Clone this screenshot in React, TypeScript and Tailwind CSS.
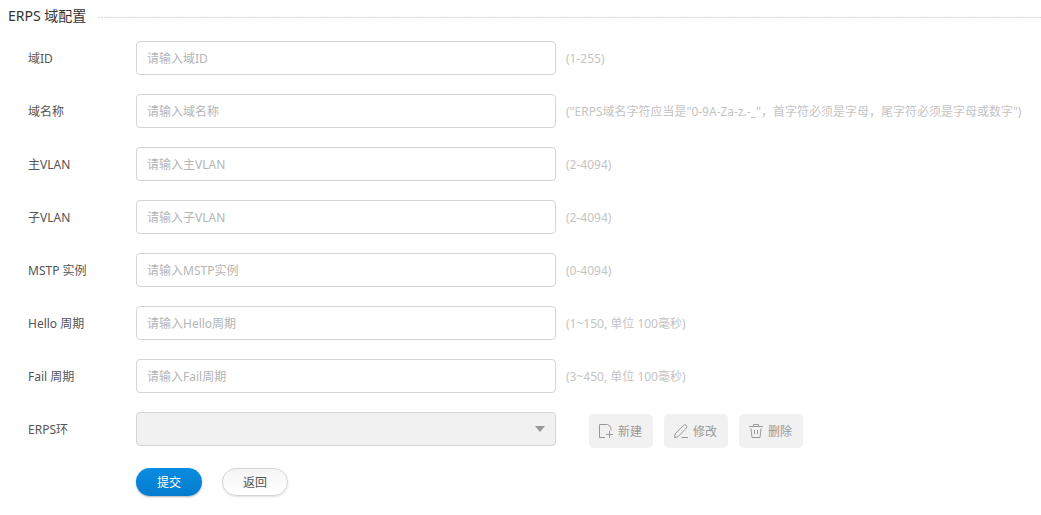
import React from 'react';

interface Field {
  id: string;
  label: string;
  placeholder: string;
  hint: string;
}

const fields: Field[] = [
  { id: 'domain-id', label: '域ID', placeholder: '请输入域ID', hint: '(1-255)' },
  {
    id: 'domain-name',
    label: '域名称',
    placeholder: '请输入域名称',
    hint: '("ERPS域名字符应当是"0-9A-Za-z.-_"，首字符必须是字母，尾字符必须是字母或数字")'
  },
  { id: 'main-vlan', label: '主VLAN', placeholder: '请输入主VLAN', hint: '(2-4094)' },
  { id: 'sub-vlan', label: '子VLAN', placeholder: '请输入子VLAN', hint: '(2-4094)' },
  { id: 'mstp', label: 'MSTP 实例', placeholder: '请输入MSTP实例', hint: '(0-4094)' },
  { id: 'hello', label: 'Hello 周期', placeholder: '请输入Hello周期', hint: '(1~150, 单位 100毫秒)' },
  { id: 'fail', label: 'Fail 周期', placeholder: '请输入Fail周期', hint: '(3~450, 单位 100毫秒)' }
];

const IconSvg: React.FC<{ children: React.ReactNode }> = ({ children }) => (
  <svg width="16" height="16" viewBox="0 0 16 16" fill="none" stroke="currentColor" aria-hidden="true" className="shrink-0">
    {children}
  </svg>
);

const NewIcon = () => (
  <IconSvg>
    <path d="M7 14.500h-5.500v-13h8q2.500 1 3.500 3.500v2.500M11.500 8v7M8 11.500h7" />
  </IconSvg>
);

const EditIcon = () => (
  <IconSvg>
    <path d="M1.500 14.500l.5-3.500 8.500-8.700q1.300-1.200 2.700.1t.2 2.700L5 13.700zM8.500 14.500H15" />
  </IconSvg>
);

const DeleteIcon = () => (
  <IconSvg>
    <path d="M1 3.500h14M5.500 3.500v-2h5v2M3 5.500l1 9h8l1-9M6.500 7v4M9.500 7v4" />
  </IconSvg>
);

const actions = [
  { label: '新建', icon: <NewIcon /> },
  { label: '修改', icon: <EditIcon /> },
  { label: '删除', icon: <DeleteIcon /> }
];

const App: React.FC = () => {
  return (
    <form
      className="bg-white pb-4 text-[12px] leading-4 text-[#555] font-['Noto_Sans','Noto_Sans_CJK_SC',sans-serif]"
      onSubmit={(e) => e.preventDefault()}
    >
      <div className="flex h-8 items-center gap-3 pl-2">
        <h1 className="text-[14px] leading-5 text-[#333]">ERPS 域配置</h1>
        <div className="mt-0.5 h-px flex-1 bg-[repeating-linear-gradient(90deg,#d8d8d8_0_2px,#fff_2px_3px)]" />
      </div>

      <div className="mt-[9px] flex flex-col gap-[19px] pl-7">
        {fields.map((field) => (
          <div key={field.id} className="flex items-center">
            <label htmlFor={field.id} className="w-27 shrink-0 pt-0.5">
              {field.label}
            </label>
            <input
              id={field.id}
              type="text"
              placeholder={field.placeholder}
              className="h-[34px] w-[420px] shrink-0 rounded-[4px] border border-[#d5d5d5] px-2.5 placeholder:text-[#b5b5b5] focus:outline-none focus:border-[#0683d8]"
            />
            <span className="ml-2.5 pt-0.5 whitespace-nowrap text-[#c4c4c4]">{field.hint}</span>
          </div>
        ))}

        <div className="flex h-[34px] items-start">
          <label htmlFor="ring" className="w-27 shrink-0 self-center pt-0.5">
            ERPS环
          </label>
          <div className="relative w-[420px] shrink-0">
            <select
              id="ring"
              className="block h-[34px] w-full appearance-none rounded-[4px] border border-[#d5d5d5] bg-[#f1f1f1] px-2.5"
            />
            <svg width="10" height="6" viewBox="0 0 10 6" aria-hidden="true" className="pointer-events-none absolute top-3.5 right-[11px]">
              <path d="M0 0h10L5 6z" fill="#999" />
            </svg>
          </div>
          <div className="mt-0.5 ml-[33px] flex gap-[11px]">
            {actions.map((action) => (
              <button
                key={action.label}
                type="button"
                className="flex h-[34px] w-16 items-center gap-1 rounded-[5px] bg-[#f1f1f1] pl-[9px] text-[#999]"
              >
                {action.icon}
                <span className="pt-0.5">{action.label}</span>
              </button>
            ))}
          </div>
        </div>
      </div>

      <div className="mt-[22px] flex gap-5 pl-34">
        <button
          type="submit"
          className="h-7 w-[66px] rounded-full bg-linear-to-b from-[#0a8ce2] to-[#057ccd] pt-0.5 text-white shadow-[0_1px_2px_rgba(0,0,0,0.3)]"
        >
          提交
        </button>
        <button
          type="button"
          className="h-7 w-[66px] rounded-full border border-[#d5d5d5] bg-linear-to-b from-[#f5f5f5] to-white pt-0.5 shadow-[0_1px_2px_rgba(0,0,0,0.12)]"
        >
          返回
        </button>
      </div>
    </form>
  );
};

export default App;
